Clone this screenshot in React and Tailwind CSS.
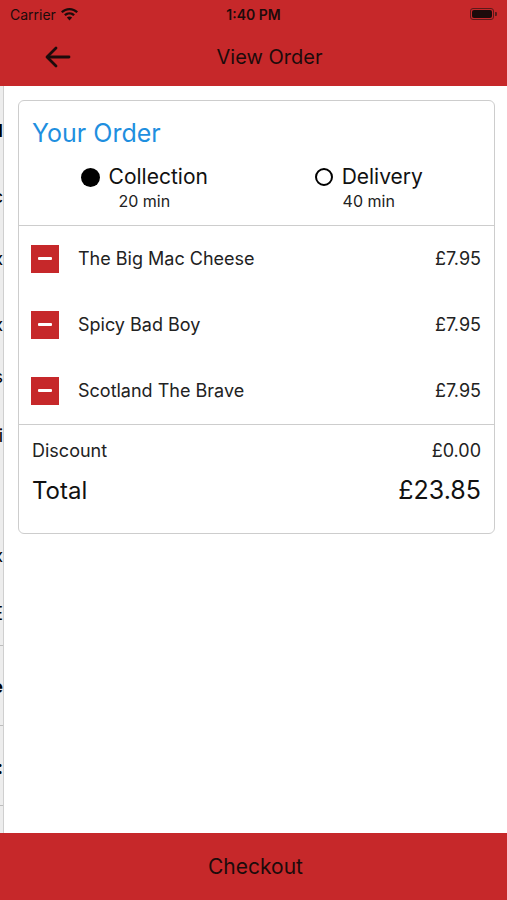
import React from "react";

const RED = "bg-[#c6282a]";

function Frag({ text, cls = "" }) {
  return (
    <div className={`h-[40px] flex items-center justify-end overflow-hidden whitespace-nowrap text-[18px] text-black ${cls}`}>
      <span>{text}</span>
    </div>
  );
}

function Minus() {
  return (
    <div className="w-[28px] h-[28px] bg-[#c6282a] flex items-center justify-center shrink-0">
      <div className="w-[14px] h-[3px] bg-white rounded-[1px]" />
    </div>
  );
}

function Item({ name, price }) {
  return (
    <div className="h-[66px] flex items-center pl-[12px] pr-[13px] pb-[1px]">
      <Minus />
      <div className="ml-[19px] flex-1 text-[18px] text-[#222]">{name}</div>
      <div className="text-[18px] text-[#222]">{price}</div>
    </div>
  );
}

export default function App() {
  return (
    <div className="w-[507px] h-[900px] flex flex-col bg-white overflow-hidden" style={{ fontFamily: "Inter, 'Noto Sans', sans-serif" }}>
      {/* header */}
      <div className={`${RED} h-[86px] shrink-0 flex flex-col text-[#1c0b0b]`}>
        <div className="h-[28px] flex items-center px-[10px] text-[14px]">
          <div className="flex items-center gap-[5px] w-[120px]">
            <span>Carrier</span>
            <svg width="17" height="13" viewBox="0 0 17 13">
              <path d="M8.5 0C5.2 0 2.3 1.3 0 3.4l1.6 1.7C3.5 3.4 5.9 2.3 8.5 2.3s5 1.1 6.9 2.8L17 3.4C14.7 1.3 11.8 0 8.5 0z" fill="#1c0b0b" />
              <path d="M8.5 4.3c-2.1 0-4 .8-5.4 2.1l1.6 1.7C5.7 7.2 7 6.6 8.5 6.6s2.8.6 3.8 1.5l1.6-1.7C12.5 5.1 10.6 4.3 8.5 4.3z" fill="#1c0b0b" />
              <path d="M8.5 8.6c-1 0-1.9.4-2.6 1L8.5 12.6l2.6-3C10.4 9 9.5 8.6 8.5 8.6z" fill="#1c0b0b" />
            </svg>
          </div>
          <div className="flex-1 text-center font-semibold">1:40 PM</div>
          <div className="w-[120px] flex justify-end items-center">
            <div className="w-[24px] h-[12px] rounded-[3px] border border-[#5a1a1a] p-[1px]">
              <div className="w-full h-full bg-[#1c0b0b] rounded-[2px]" />
            </div>
            <div className="w-[2px] h-[4px] bg-[#5a1a1a] rounded-r-[1px] ml-[1px]" />
          </div>
        </div>
        <div className="h-[58px] flex items-center">
          <div className="w-[152px] pl-[45px] flex items-center">
            <svg width="26" height="22" viewBox="0 0 26 22" fill="none" stroke="#1c0b0b" strokeWidth="2.8" strokeLinecap="round" strokeLinejoin="round">
              <path d="M24 11H3" />
              <path d="M11 2L2 11l9 9" />
            </svg>
          </div>
          <div className="flex-1 text-center text-[20px]">View Order</div>
          <div className="w-[120px]" />
        </div>
      </div>

      {/* body */}
      <div className="flex-1 flex min-h-0">
        <div className="w-[4px] bg-[#ededed] border-r border-[#cfcfcf] flex flex-col shrink-0 overflow-hidden">
          <div className="h-[24px] shrink-0" />
          <Frag text="Meal" cls="font-bold" />
          <div className="h-[26px] shrink-0" />
          <Frag text="Basic" />
          <div className="h-[22px] shrink-0" />
          <Frag text="Box" />
          <div className="h-[26px] shrink-0" />
          <Frag text="Box" />
          <div className="h-[12px] shrink-0" />
          <Frag text="Drinks" />
          <div className="h-[19px] shrink-0" />
          <Frag text="i" cls="text-[#999] text-[12px]" />
          <div className="h-[80px] shrink-0" />
          <Frag text="Box" />
          <div className="h-[18px] shrink-0" />
          <Frag text="E" />
          <div className="h-[12px] shrink-0" />
          <div className="h-[1px] bg-[#bdbdbd] shrink-0" />
          <div className="h-[20px] shrink-0" />
          <Frag text="Ie" cls="font-bold" />
          <div className="h-[19px] shrink-0" />
          <div className="h-[1px] bg-[#bdbdbd] shrink-0" />
          <div className="h-[21px] shrink-0" />
          <Frag text=":" cls="font-bold" />
          <div className="h-[18px] shrink-0" />
          <div className="h-[1px] bg-[#bdbdbd] shrink-0" />
        </div>

        <div className="flex-1 pl-[14px] pr-[12px] pt-[14px]">
          <div className="border border-[#cdcdcd] rounded-[6px] bg-white">
            <div className="pt-[17px] pb-[13px]">
              <div className="px-[13px] text-[25px] leading-[30px] text-[#1f8fdf]">Your Order</div>
              <div className="mt-[16px] grid grid-cols-2 px-[13px]">
                <div className="flex flex-col items-center">
                  <div className="flex items-center h-[26px]">
                    <div className="w-[19px] h-[19px] rounded-full bg-black" />
                    <span className="ml-[9px] text-[21px] text-[#111]">Collection</span>
                  </div>
                  <div className="text-[16px] leading-[22px] text-[#222]">20 min</div>
                </div>
                <div className="flex flex-col items-center">
                  <div className="flex items-center h-[26px]">
                    <div className="w-[18px] h-[18px] rounded-full border-2 border-black" />
                    <span className="ml-[9px] text-[21px] text-[#111]">Delivery</span>
                  </div>
                  <div className="text-[16px] leading-[22px] text-[#222]">40 min</div>
                </div>
              </div>
            </div>
            <div className="h-[1px] bg-[#cdcdcd]" />
            <Item name="The Big Mac Cheese" price="£7.95" />
            <Item name="Spicy Bad Boy" price="£7.95" />
            <Item name="Scotland The Brave" price="£7.95" />
            <div className="h-[1px] bg-[#cdcdcd]" />
            <div className="pl-[13px] pr-[13px] pt-[14px] pb-[27px]">
              <div className="flex items-center justify-between h-[22px] text-[18px] text-[#222]">
                <span>Discount</span>
                <span>£0.00</span>
              </div>
              <div className="mt-[15px] flex items-center justify-between h-[30px] text-[24px] text-[#111]">
                <span>Total</span>
                <span className="text-[25px]">£23.85</span>
              </div>
            </div>
          </div>
        </div>
      </div>

      {/* checkout */}
      <div className={`${RED} h-[67px] shrink-0 flex items-center justify-center pl-[4px] text-[21px] text-[#1c0b0b]`}>
        Checkout
      </div>
    </div>
  );
}
